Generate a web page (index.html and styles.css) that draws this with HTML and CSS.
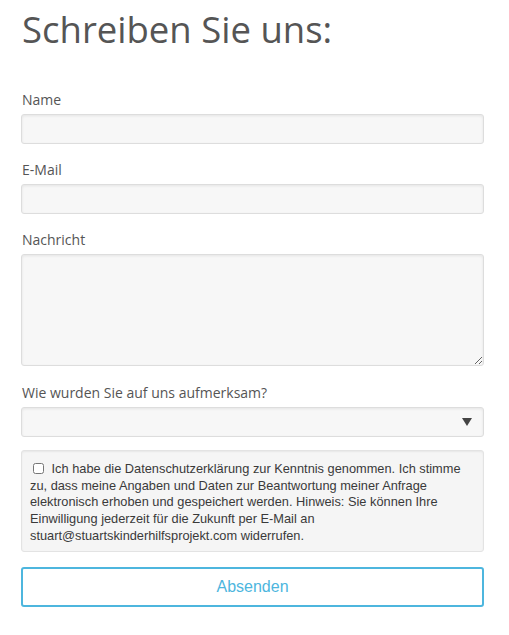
FILE: index.html
```html
<!DOCTYPE html>
<html lang="de">
<head>
    <meta charset="UTF-8">
    <title>Kontakt</title>
    <link rel="stylesheet" href="styles.css">
</head>
<body>
    <div class="contact">
        <h1>Schreiben Sie uns:</h1>
        <form class="contact-form" autocomplete="off">
            <label class="field-label" for="name">Name</label>
            <input class="field" type="text" id="name">

            <label class="field-label" for="email">E-Mail</label>
            <input class="field" type="email" id="email">

            <label class="field-label" for="message">Nachricht</label>
            <textarea class="field field-area" id="message"></textarea>

            <label class="field-label" for="source">Wie wurden Sie auf uns aufmerksam?</label>
            <div class="select-wrap">
                <select class="field field-select" id="source">
                    <option></option>
                </select>
                <span class="select-arrow"></span>
            </div>

            <div class="consent">
                <label>
                    <input type="checkbox" class="consent-box">
                    Ich habe die Datenschutzerklärung zur Kenntnis genommen. Ich stimme zu, dass meine Angaben und Daten zur Beantwortung meiner Anfrage elektronisch erhoben und gespeichert werden. Hinweis: Sie können Ihre Einwilligung jederzeit für die Zukunft per E-Mail an stuart@stuartskinderhilfsprojekt.com widerrufen.
                </label>
            </div>

            <button type="submit" class="send">Absenden</button>
        </form>
    </div>
</body>
</html>
```

FILE: styles.css
```css
html, body
{
    margin: 0;
    padding: 0;
    background: #fff;
}
body
{
    font-family: 'Open Sans', sans-serif;
    color: #555;
}
.contact
{
    padding: 0 25px 0 21px;
}
h1
{
    margin: 0;
    padding: 4px 0 0 1px;
    font-size: 36.5px;
    font-weight: 400;
    line-height: 50px;
    color: #555;
}
.contact-form
{
    display: flex;
    flex-direction: column;
    margin-top: 36px;
}
.field-label
{
    font-size: 14px;
    line-height: 20px;
    margin-bottom: 4px;
    padding-left: 1px;
}
.field
{
    box-sizing: border-box;
    width: 100%;
    height: 30px;
    margin: 0 0 16px 0;
    border: 1px solid #ddd;
    border-radius: 3px;
    background: #f7f7f7;
    box-shadow: inset 0 1px 3px rgba(0, 0, 0, 0.08);
    font-family: inherit;
    font-size: 14px;
    color: #555;
}
.field-area
{
    height: 112px;
    margin-bottom: 17px;
    resize: vertical;
}
.select-wrap
{
    position: relative;
}
.field-select
{
    appearance: none;
    -webkit-appearance: none;
    display: block;
    height: 30px;
    margin-bottom: 13px;
}
.select-arrow
{
    position: absolute;
    right: 12px;
    top: 11px;
    width: 0;
    height: 0;
    border-left: 5px solid transparent;
    border-right: 5px solid transparent;
    border-top: 8px solid #444;
}
.consent
{
    box-sizing: border-box;
    height: 102px;
    padding: 10px 18px 0 8px;
    border: 1px solid #e3e3e3;
    border-radius: 3px;
    background: #f5f5f5;
    box-shadow: inset 0 1px 2px rgba(0, 0, 0, 0.06);
    font-family: 'Liberation Sans', Arial, sans-serif;
    font-size: 12.8px;
    line-height: 16.7px;
    color: #3a3a3a;
}
.consent-box
{
    width: 11px;
    height: 11px;
    margin: 0 4px 0 3px;
    vertical-align: -1px;
}
.send
{
    margin-top: 15px;
    height: 40px;
    border: 2px solid #4db6de;
    border-radius: 3px;
    background: #fff;
    color: #4db6de;
    font-family: 'Liberation Sans', Arial, sans-serif;
    font-size: 16px;
    cursor: pointer;
}
```
